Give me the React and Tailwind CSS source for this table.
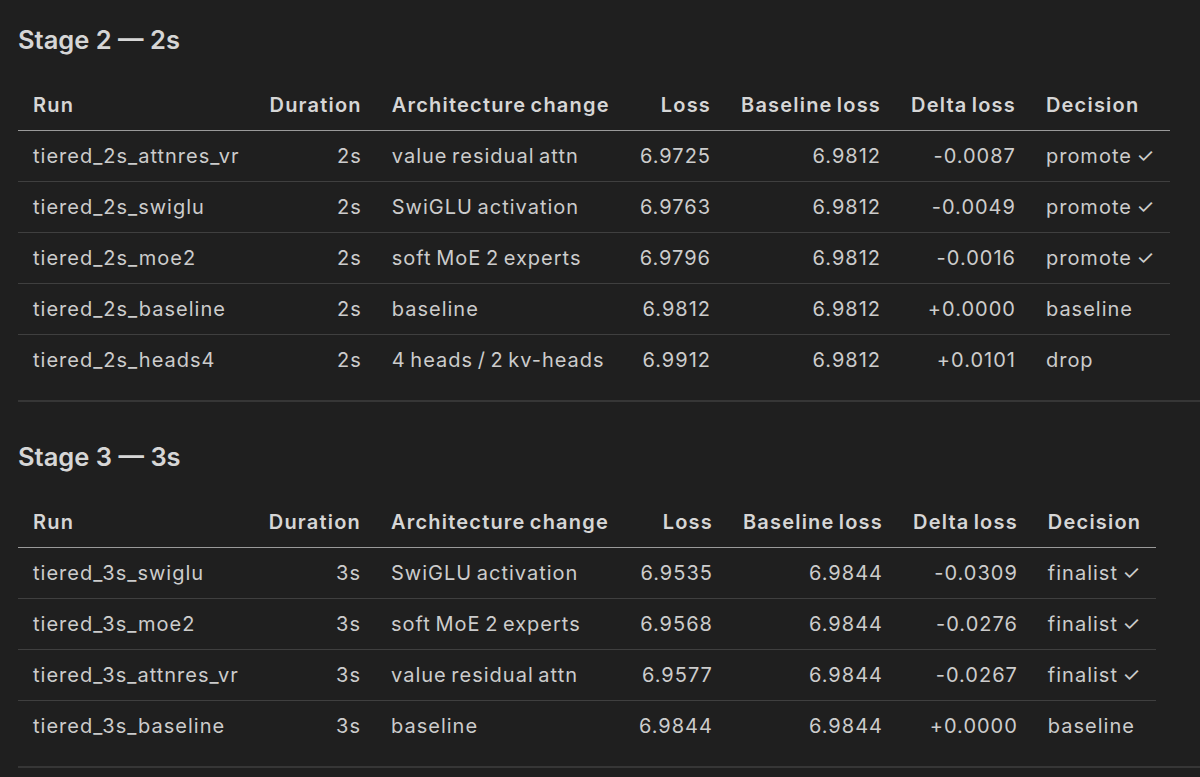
const stages = [
  {
    title: 'Stage 2 — 2s',
    rows: [
      ['tiered_2s_attnres_vr', '2s', 'value residual attn', '6.9725', '6.9812', '-0.0087', 'promote ✓'],
      ['tiered_2s_swiglu', '2s', 'SwiGLU activation', '6.9763', '6.9812', '-0.0049', 'promote ✓'],
      ['tiered_2s_moe2', '2s', 'soft MoE 2 experts', '6.9796', '6.9812', '-0.0016', 'promote ✓'],
      ['tiered_2s_baseline', '2s', 'baseline', '6.9812', '6.9812', '+0.0000', 'baseline'],
      ['tiered_2s_heads4', '2s', '4 heads / 2 kv-heads', '6.9912', '6.9812', '+0.0101', 'drop'],
    ],
  },
  {
    title: 'Stage 3 — 3s',
    rows: [
      ['tiered_3s_swiglu', '3s', 'SwiGLU activation', '6.9535', '6.9844', '-0.0309', 'finalist ✓'],
      ['tiered_3s_moe2', '3s', 'soft MoE 2 experts', '6.9568', '6.9844', '-0.0276', 'finalist ✓'],
      ['tiered_3s_attnres_vr', '3s', 'value residual attn', '6.9577', '6.9844', '-0.0267', 'finalist ✓'],
      ['tiered_3s_baseline', '3s', 'baseline', '6.9844', '6.9844', '+0.0000', 'baseline'],
    ],
  },
]

const headers = [
  { label: 'Run', right: false },
  { label: 'Duration', right: true },
  { label: 'Architecture change', right: false },
  { label: 'Loss', right: true },
  { label: 'Baseline loss', right: true },
  { label: 'Delta loss', right: true },
  { label: 'Decision', right: false },
]

function StageTable({ title, rows }) {
  return (
    <section>
      <h3 className="text-[25.5px] leading-[32px] font-semibold text-[#d6d6d6]">{title}</h3>
      <table className="mt-6 border-collapse text-[20px] leading-[20px] tracking-[1px] [word-spacing:-2px]">
        <thead>
          <tr className="border-b border-[#9a9a9a]">
            {headers.map((h) => (
              <th
                key={h.label}
                className={`h-[50px] px-[15px] font-semibold text-[#d6d6d6] tracking-[1.2px] ${h.right ? 'text-right' : 'text-left'}`}
              >
                {h.label}
              </th>
            ))}
          </tr>
        </thead>
        <tbody>
          {rows.map((r, i) => (
            <tr key={r[0]} className={i < rows.length - 1 ? 'border-b border-[#3f3f3f]' : ''}>
              {r.map((cell, j) => (
                <td
                  key={j}
                  className={`h-[51px] px-[15px] text-[#cccccc] whitespace-nowrap ${headers[j].right ? 'text-right' : 'text-left'}`}
                >
                  {cell}
                </td>
              ))}
            </tr>
          ))}
        </tbody>
      </table>
      <div className="mt-[15px] h-[2px] bg-[#363636]" />
    </section>
  )
}

export default function App() {
  return (
    <div className="min-h-screen bg-[#1f1f1f] pl-[18px] pt-6 font-['Inter',sans-serif] antialiased">
      <div className="flex flex-col gap-[39px]">
        {stages.map((s) => (
          <StageTable key={s.title} title={s.title} rows={s.rows} />
        ))}
      </div>
    </div>
  )
}
